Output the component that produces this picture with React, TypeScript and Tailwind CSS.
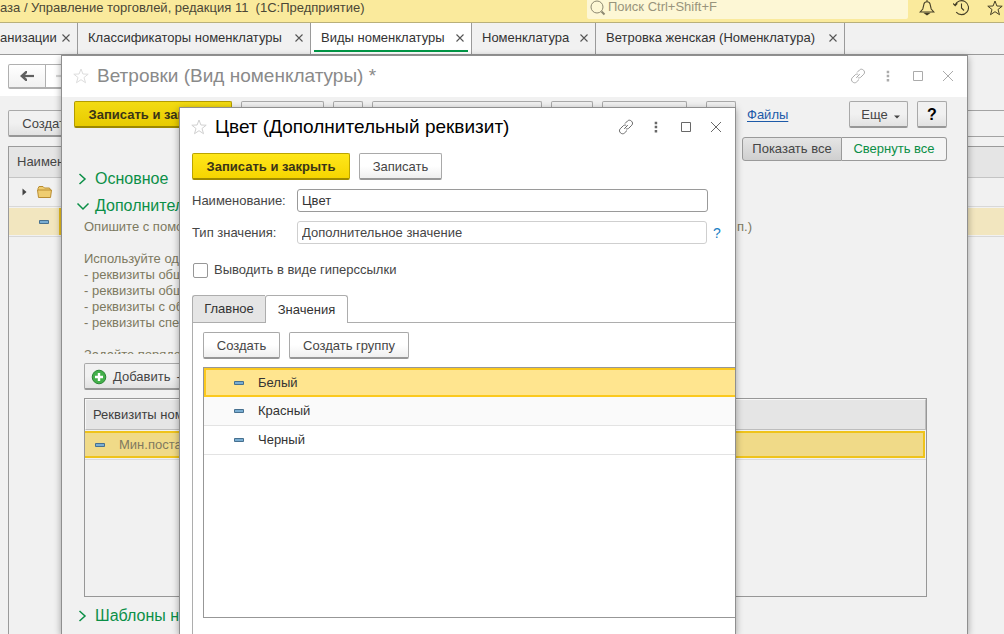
import React from "react";

const tabs = [
  { title: "анизации", active: false, size: "w-[78px]" },
  { title: "Классификаторы номенклатуры", active: false, size: "w-[233px]" },
  { title: "Виды номенклатуры", active: true, size: "w-[161px]" },
  { title: "Номенклатура", active: false, size: "w-[124px]" },
  { title: "Ветровка женская (Номенклатура)", active: false, size: "w-[249px]" },
];

const values = ["Белый", "Красный", "Черный"];

const buttonBase =
  "h-[27px] shrink-0 rounded-[2px] border border-b-2 border-[#a9a9a9] border-b-[#979797] bg-linear-to-b pt-px whitespace-nowrap";
const lightButton = buttonBase + " from-white from-50% to-[#efefef] text-[#454545]";
const dimButton = buttonBase + " from-[#f1f1f1] from-50% to-[#e2e2e2] text-[#454545]";
const accentBase =
  "h-[27px] shrink-0 rounded-[2px] border border-b-2 bg-linear-to-b pt-px font-bold whitespace-nowrap text-[#3a3417]";

function Star({ className }: { className: string }) {
  return (
    <svg viewBox="0 0 16 16" className={className} fill="none" stroke="currentColor" aria-hidden="true">
      <path d="M8 1 L9.9 6 L15.2 6.2 L11 9.5 L12.5 14.7 L8 11.7 L3.5 14.7 L5 9.5 L0.8 6.2 L6.1 6 Z" />
    </svg>
  );
}

function LinkIcon() {
  return (
    <svg viewBox="0 0 16 16" className="size-4" fill="none" stroke="currentColor" aria-hidden="true">
      <path d="M7 4.5 L9.6 1.9 C12 -0.4 16.3 3.5 13.8 6.2 L10.8 9.2 C10 10 8.8 10.1 7.8 9.7" />
      <path d="M9 11.5 L6.4 14.1 C4 16.4 -0.3 12.5 2.2 9.8 L5.2 6.8 C6 6 7.2 5.9 8.2 6.3" />
      <path d="M6.2 9.8 L9.8 6.2" />
    </svg>
  );
}

function WindowControls({ className }: { className: string }) {
  return (
    <div className={"flex items-center gap-[14px] " + className}>
      <button aria-label="Ссылка" className="size-4"><LinkIcon /></button>
      <button aria-label="Меню" className="size-4">
        <svg viewBox="0 0 16 16" className="size-4" fill="currentColor" aria-hidden="true">
          <path d="M6.7 2.7h2.5v2.5h-2.5z M6.7 6.8h2.5v2.5h-2.5z M6.7 10.9h2.5v2.5h-2.5z" />
        </svg>
      </button>
      <button aria-label="Развернуть" className="size-4">
        <svg viewBox="0 0 16 16" className="size-4" fill="none" stroke="currentColor" aria-hidden="true">
          <path d="M3.5 3.5h9v9h-9z" />
        </svg>
      </button>
      <button aria-label="Закрыть" className="size-4">
        <svg viewBox="0 0 16 16" className="size-4" fill="none" stroke="currentColor" aria-hidden="true">
          <path d="M3 3 L13 13 M13 3 L3 13" />
        </svg>
      </button>
    </div>
  );
}

function Dash() {
  return (
    <svg viewBox="0 0 10 4" className="block h-1 w-[10px] shrink-0" aria-hidden="true">
      <path d="M0.5 0.5h9v3h-9z" fill="#79add2" stroke="#47708f" />
    </svg>
  );
}

function Section({ title, open }: { title: string; open?: boolean }) {
  return (
    <button className="flex items-center gap-[5px] text-base leading-[27px] whitespace-nowrap text-[#0b8f47]">
      <svg viewBox="0 0 14 14" className="size-[14px]" fill="none" stroke="currentColor" strokeWidth="1.5" aria-hidden="true">
        <path d={open ? "M1.5 4.5 L7 10 L12.5 4.5" : "M3.5 2 L9 7 L3.5 12"} />
      </svg>
      {title}
    </button>
  );
}

function TopBar() {
  return (
    <header className="flex h-[23px] shrink-0 justify-between border-b border-[#b9b07a] bg-[#faea9c]">
      <div className="flex h-4 min-w-0 items-center whitespace-pre text-[#4b4736]">
        аза / Управление торговлей, редакция 11  (1С:Предприятие)
      </div>
      <div className="flex">
        <label className="flex h-[19px] w-[321px] items-start gap-[2px] rounded-b-[2px] bg-[#fdf7d5] pl-[3px]">
          <svg viewBox="0 0 16 16" className="size-4 text-[#8c8871]" fill="none" stroke="currentColor" aria-hidden="true">
            <circle cx="7" cy="7" r="6" />
            <path d="M11.5 11.5 L14.5 14.5" strokeWidth="2" />
          </svg>
          <input
            aria-label="Поиск"
            placeholder="Поиск Ctrl+Shift+F"
            className="h-[14px] min-w-0 flex-1 bg-transparent leading-[14px] outline-none placeholder:text-[#98947c]"
          />
        </label>
        <div className="flex w-24 items-start gap-[18px] overflow-hidden pl-[11px] text-[#453f27]">
          <button aria-label="Уведомления" className="size-4 shrink-0">
            <svg viewBox="0 0 16 16" className="size-4" fill="none" stroke="currentColor" strokeWidth="1.1" aria-hidden="true">
              <path d="M8 0 V1.5 M1.2 12 H14.8 L12.2 9 L11 4 C10.5 1 5.5 1 5 4 L3.8 9 Z" />
              <path d="M6 13.4 H10 L8 14.8 Z" fill="currentColor" />
            </svg>
          </button>
          <button aria-label="История" className="size-4 shrink-0">
            <svg viewBox="0 0 16 16" className="size-4" fill="none" stroke="currentColor" strokeWidth="1.1" aria-hidden="true">
              <path d="M2 5 A7 7 0 1 1 3.2 12.2 M0 3.4 L2.2 5.6 L4.4 3.4 M8.5 3.5 V8 L11 10.5" />
            </svg>
          </button>
          <button aria-label="Избранное" className="size-4 shrink-0"><Star className="size-4" /></button>
        </div>
      </div>
    </header>
  );
}

function TabBar() {
  return (
    <nav className="flex h-8 shrink-0 border-b border-[#9a9a9a] bg-[#f1f1f1]">
      {tabs.map((t) => (
        <div
          key={t.title}
          className={"group flex shrink-0 border-r border-[#9a9a9a] px-[3px] first:pl-0 " + t.size + (t.active ? " bg-white" : "")}
        >
          <div
            className={
              "mb-[2px] flex flex-1 items-center border-b-2 pt-[3px] pr-[3px] pl-[7px] group-first:pl-0 " +
              (t.active ? "border-[#009646]" : "border-transparent")
            }
          >
            <button className="flex-1 text-left whitespace-nowrap text-[#333333]">{t.title}</button>
            <button aria-label="Закрыть вкладку" className="size-[10px]">
              <svg viewBox="0 0 10 10" className="size-[10px]" fill="none" stroke="#555" strokeWidth="1.1" aria-hidden="true">
                <path d="M1.5 1.5 L8.5 8.5 M8.5 1.5 L1.5 8.5" />
              </svg>
            </button>
          </div>
        </div>
      ))}
    </nav>
  );
}

function ListPage() {
  return (
    <main className="flex flex-1 flex-col bg-[#f1f1f1]">
      <div className="flex h-[41px]">
        <div className="flex w-[84px] items-center bg-white pt-px pl-2">
          <button aria-label="Назад" className="flex h-[25px] w-[38px] items-center justify-center rounded-l-[2px] border border-b-2 border-[#b0b0b0] bg-linear-to-b from-white to-[#f1f1f1]">
            <svg viewBox="0 0 14 10" className="h-[10px] w-[14px]" aria-hidden="true">
              <path d="M14 5 H3" stroke="#606060" strokeWidth="2.2" />
              <path d="M5.5 0 L0 5 L5.5 10 H7 V8 L4 5 L7 2 V0 Z" fill="#606060" />
            </svg>
          </button>
          <button aria-label="Вперед" className="flex h-[25px] w-[38px] items-center rounded-r-[2px] border border-b-2 border-l-0 border-[#b0b0b0] bg-white pl-[10px]">
            <svg viewBox="0 0 14 10" className="h-[10px] w-[14px]" aria-hidden="true">
              <path d="M0 5 H11" stroke="#d4d4d4" strokeWidth="2.2" />
              <path d="M8.5 0 L14 5 L8.5 10 H7 V8 L10 5 L7 2 V0 Z" fill="#d4d4d4" />
            </svg>
          </button>
        </div>
      </div>
      <div className="mt-[14px] flex pl-2">
        <button className={dimButton + " w-[78px]"}>Создать</button>
        <input aria-label="Поиск по списку" className="ml-[600px] h-[27px] min-w-0 flex-1 border-y border-[#a3a3a3] outline-none" />
      </div>
      <div className="mt-[9px] ml-2 flex-1 border-t border-l border-[#9a9a9a]">
        <table className="w-full border-separate border-spacing-0 text-left">
          <thead>
            <tr>
              <th className="h-[31px] border-b border-[#c4c4c4] bg-[#e5e5e5] pl-2 font-normal text-[#454545]">Наименование</th>
            </tr>
          </thead>
          <tbody>
            <tr>
              <td className="h-[29px] border-b border-[#d8d8d8] p-0">
                <div className="flex items-center gap-[10px] pl-[13px]">
                  <svg viewBox="0 0 5 8" className="h-2 w-[5px]" fill="#444" aria-hidden="true">
                    <path d="M0.5 0.5 L4.5 4 L0.5 7.5 Z" />
                  </svg>
                  <svg viewBox="0 0 15 12" className="h-3 w-[15px]" aria-hidden="true">
                    <path d="M1 2.5 L2 0.5 H6 L7.5 2 H12.5 L13.5 4 H14.5 L13.5 11.5 H1.5 L0.5 4 H1 Z" fill="#efcd70" stroke="#b98d32" />
                    <path d="M1 4 H14" stroke="#b98d32" />
                  </svg>
                </div>
              </td>
            </tr>
            <tr>
              <td className="border-b border-[#d8d8d8] px-0 py-px">
                <div className="flex h-[27px] items-center bg-[#f2e6bf] pl-[30px]">
                  <Dash />
                  <span className="ml-[10px] h-[27px] flex-1 border-l-4 border-[#ecc11d]" />
                </div>
              </td>
            </tr>
          </tbody>
        </table>
      </div>
    </main>
  );
}

function KindWindow() {
  return (
    <section className="absolute top-[55px] right-9 bottom-0 left-[61px] flex flex-col border border-b-0 border-[#8f8f8f] bg-[#f1f1f1] shadow-[0_2px_7px_rgba(0,0,0,0.35)]">
      <div className="flex h-[41px] shrink-0 items-center bg-white pr-[11px] pb-[2px] pl-[11px]">
        <Star className="size-4 text-[#dddddd]" />
        <h1 className="ml-2 flex-1 text-[19px] leading-6 text-[#8a8a8a]">Ветровки (Вид номенклатуры) *</h1>
        <WindowControls className="text-[#ababab]" />
      </div>
      <div className="mt-1 flex shrink-0 gap-[9px] pr-5 pl-3">
        <button className={accentBase + " w-[158px] border-[#b39c00] border-b-[#9c8800] from-[#f3db12] to-[#e8cb00]"}>
          Записать и закрыть
        </button>
        <button aria-label="Записать" className={dimButton + " w-[83px]"} />
        <button aria-label="Структура" className={dimButton + " w-[30px]"} />
        <button aria-label="Перейти" className={dimButton + " w-[170px]"} />
        <button aria-label="Печать" className={dimButton + " w-[42px]"} />
        <button aria-label="Отчеты" className={dimButton + " w-[85px]"} />
        <button aria-label="Вложения" className={dimButton + " ml-[10px] w-[30px]"} />
        <a href="#files" className="ml-[2px] flex-1 self-center text-[#1d5aa8] underline underline-offset-2">Файлы</a>
        <button className={dimButton + " flex w-[59px] items-center justify-center gap-[6px] pl-1"}>
          Еще
          <svg viewBox="0 0 6 4" className="mt-1 h-1 w-[6px]" fill="#444" aria-hidden="true"><path d="M0 0.5h6L3 3.5z" /></svg>
        </button>
        <button className={dimButton + " w-[30px] text-base font-bold text-black"}>?</button>
      </div>
      <div className="mt-[9px] flex shrink-0 justify-end pr-5">
        <button className="h-6 w-[100px] rounded-l-[3px] border border-[#9a9a9a] bg-linear-to-b from-[#e5e5e5] to-[#cfcfcf] whitespace-nowrap text-[#454545]">
          Показать все
        </button>
        <button className="h-6 w-[105px] rounded-r-[3px] border border-l-0 border-[#9a9a9a] bg-[#f5f5f5] whitespace-nowrap text-[#0b8f47]">
          Свернуть все
        </button>
      </div>
      <div className="mt-1 flex shrink-0 flex-col items-start pl-[14px]">
        <Section title="Основное" />
        <Section title="Дополнительные реквизиты" open />
      </div>
      <div className="mr-[215px] ml-[22px] h-[135px] shrink-0 overflow-hidden leading-4 whitespace-nowrap text-[#7d7960]">
        <p className="flex justify-between"><span>Опишите с помощью</span><span>п.)</span></p>
        <p className="mt-4">Используйте один</p>
        <p>- реквизиты общие</p>
        <p>- реквизиты общие</p>
        <p>- реквизиты с общим</p>
        <p>- реквизиты специальные</p>
        <p className="mt-4">Задайте порядок</p>
      </div>
      <div className="mt-[9px] flex shrink-0 pl-[22px]">
        <button className={dimButton + " flex items-center gap-[6px] px-[6px]"}>
          <svg viewBox="0 0 16 16" className="size-4" aria-hidden="true">
            <circle cx="8" cy="8" r="6.8" fill="#43b04a" stroke="#2b8535" />
            <path d="M8 4 V12 M4 8 H12" stroke="#fff" strokeWidth="2.4" />
          </svg>
          <span>Добавить</span>
          <span>-</span>
        </button>
      </div>
      <div className="mt-2 mr-10 ml-[22px] flex-1 border border-[#979797]">
        <table className="w-full border-separate border-spacing-0 text-left">
          <thead>
            <tr>
              <th className="h-[31px] border border-t-[#f7f7f7] border-r-[#bdbdbd] border-b-[#bdbdbd] border-l-[#f7f7f7] bg-[#e5e5e5] py-0 pr-0 pl-[7px] font-normal text-[#3f3f3f]">
                Реквизиты номенклатуры
              </th>
            </tr>
          </thead>
          <tbody>
            <tr>
              <td className="border-b border-[#dadada] py-px pr-px pl-0">
                <div className="flex h-[27px] items-center gap-[14px] border-2 border-l-0 border-[#efc31b] bg-[#f0da88] pl-[10px] text-[#80795f]">
                  <Dash />
                  Мин.поставка
                </div>
              </td>
            </tr>
          </tbody>
        </table>
      </div>
      <div className="mt-[5px] mb-[5px] flex shrink-0 pl-[14px]">
        <Section title="Шаблоны наименований" />
      </div>
    </section>
  );
}

function PropertyDialog() {
  return (
    <section className="absolute top-[107px] right-[268px] bottom-0 left-[179px] flex flex-col border border-b-0 border-[#8f8f8f] bg-white shadow-[0_2px_7px_rgba(0,0,0,0.35)]">
      <div className="flex h-[38px] shrink-0 items-center pr-[11px] pl-[11px]">
        <Star className="size-4 text-[#d0d0d0]" />
        <h2 className="ml-2 flex-1 text-[19px] leading-6 whitespace-nowrap text-black">Цвет (Дополнительный реквизит)</h2>
        <WindowControls className="text-[#686868]" />
      </div>
      <div className="mt-[7px] flex shrink-0 gap-[9px] pl-3">
        <button className={accentBase + " w-[158px] border-[#bba400] border-b-[#a08b00] from-[#ffe719] to-[#f6d500]"}>
          Записать и закрыть
        </button>
        <button className={lightButton + " w-[83px]"}>Записать</button>
      </div>
      <div className="mt-[9px] flex shrink-0 items-center pr-[27px] pl-3 text-[#454545]">
        <label htmlFor="name" className="w-[105px] shrink-0">Наименование:</label>
        <input id="name" defaultValue="Цвет" className="h-[23px] min-w-0 flex-1 rounded-[3px] border border-[#9a9a9a] px-1 text-[#333] outline-none" />
      </div>
      <div className="mt-[9px] flex shrink-0 items-center pr-3 pl-3 text-[#454545]">
        <label htmlFor="type" className="w-[105px] shrink-0">Тип значения:</label>
        <input id="type" readOnly defaultValue="Дополнительное значение" className="h-[23px] min-w-0 flex-1 rounded-[3px] border border-[#cfcfcf] px-1 text-[#454545] outline-none" />
        <button aria-label="Подсказка" className="w-4 pl-1 text-sm text-[#1b7fc4]">?</button>
      </div>
      <label className="mt-[18px] flex h-4 shrink-0 items-center gap-[6px] pl-[13px] text-[#454545]">
        <input type="checkbox" className="size-[15px] appearance-none rounded-[2px] border border-[#979797] bg-white" />
        Выводить в виде гиперссылки
      </label>
      <div className="mt-[17px] flex h-7 shrink-0 pl-3">
        <button className="w-[73px] rounded-tl-[3px] border border-r-0 border-[#adadad] bg-[#e5e5e5] text-[#333]">Главное</button>
        <button className="w-[83px] rounded-t-[3px] border border-b-0 border-[#adadad] bg-white text-[#333]">Значения</button>
        <div className="flex-1 border-b border-[#adadad]" />
      </div>
      <div className="ml-3 flex flex-1 flex-col border-l border-[#adadad] pt-[9px] pb-4 pl-[10px]">
        <div className="flex shrink-0 gap-[9px]">
          <button className={lightButton + " w-[77px]"}>Создать</button>
          <button className={lightButton + " w-[120px]"}>Создать группу</button>
        </div>
        <div className="mt-2 flex-1 border border-r-0 border-[#979797]">
          <table className="w-full border-separate border-spacing-0 text-left">
            <tbody>
              {values.map((v, i) => (
                <tr key={v} className={i === 1 ? "bg-[#fafafa]" : ""}>
                  <td className={"p-0 " + (i === 0 ? "" : "border-b border-[#e3e3e3]")}>
                    <div
                      className={
                        "flex items-center gap-[14px] text-[#333] " +
                        (i === 0 ? "h-[29px] border-y-2 border-l-2 border-[#fbc91e] bg-[#ffe58f] pl-7" : "h-7 pl-[30px]")
                      }
                    >
                      <Dash />
                      {v}
                    </div>
                  </td>
                </tr>
              ))}
            </tbody>
          </table>
        </div>
      </div>
    </section>
  );
}

export default function App() {
  return (
    <div className="relative flex h-screen flex-col overflow-hidden bg-[#f1f1f1] font-['Liberation_Sans',Arial,sans-serif] text-[13px] leading-4">
      <TopBar />
      <TabBar />
      <ListPage />
      <KindWindow />
      <PropertyDialog />
    </div>
  );
}
